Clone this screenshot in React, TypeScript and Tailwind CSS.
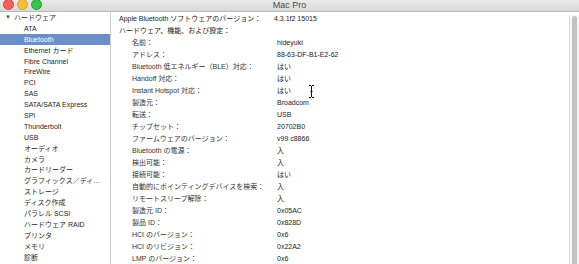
const font = "font-['Liberation_Sans','Noto_Sans_CJK_JP',sans-serif]";

const sidebarItems = [
  "ATA",
  "Bluetooth",
  "Ethernet カード",
  "Fibre Channel",
  "FireWire",
  "PCI",
  "SAS",
  "SATA/SATA Express",
  "SPI",
  "Thunderbolt",
  "USB",
  "オーディオ",
  "カメラ",
  "カードリーダー",
  "グラフィックス／ディ…",
  "ストレージ",
  "ディスク作成",
  "パラレル SCSI",
  "ハードウェア RAID",
  "プリンタ",
  "メモリ",
  "診断",
  "電源",
];

const details: [string, string][] = [
  ["名前：", "hideyuki"],
  ["アドレス：", "88-63-DF-B1-E2-62"],
  ["Bluetooth 低エネルギー（BLE）対応：", "はい"],
  ["Handoff 対応：", "はい"],
  ["Instant Hotspot 対応：", "はい"],
  ["製造元：", "Broadcom"],
  ["転送：", "USB"],
  ["チップセット：", "20702B0"],
  ["ファームウェアのバージョン：", "v99 c8866"],
  ["Bluetooth の電源：", "入"],
  ["検出可能：", "入"],
  ["接続可能：", "はい"],
  ["自動的にポインティングデバイスを検索：", "入"],
  ["リモートスリープ解除：", "入"],
  ["製造元 ID：", "0x05AC"],
  ["製品 ID：", "0x828D"],
  ["HCI のバージョン：", "0x6"],
  ["HCI のリビジョン：", "0x22A2"],
  ["LMP のバージョン：", "0x6"],
];

function TitleBar() {
  return (
    <div className="grid h-[12px] shrink-0 grid-cols-[1fr_auto_1fr] items-center border-b border-[#b9b9b9] bg-gradient-to-b from-[#e9e9e9] to-[#d9d9d9]">
      <div className="-mt-[3px] flex gap-[3px] pl-[3px]">
        <span className="h-[11px] w-[11px] rounded-full border border-[#d9443c] bg-[#f4605a]" />
        <span className="h-[11px] w-[11px] rounded-full border border-[#d99f1f] bg-[#f7bd34]" />
        <span className="h-[11px] w-[11px] rounded-full border border-[#1da22e] bg-[#34c64a]" />
      </div>
      <div className="-mt-[1px] text-[9px] leading-none text-[#4a4a4a]">Mac Pro</div>
      <div />
    </div>
  );
}

function Sidebar() {
  return (
    <div className="w-[111px] shrink-0 border-r border-[#d0d0d0] text-[7px] text-[#262626]">
      <div className="flex h-[10.9px] items-center pl-[5px] leading-none">
        <span className="mr-[3px] text-[6px] text-[#555]">▼</span>
        ハードウェア
      </div>
      {sidebarItems.map((item) => (
        <div
          key={item}
          className={`flex h-[10.9px] items-center whitespace-nowrap pl-[24px] leading-none ${
            item === "Bluetooth" ? "bg-[#6d8fc9] text-white" : ""
          }`}
        >
          {item}
        </div>
      ))}
    </div>
  );
}

function Content() {
  return (
    <div className="relative flex-1 pl-[8px] text-[7px] text-[#222]">
      <div className="flex h-[12px] items-center whitespace-nowrap leading-none">
        <span className="w-[155px]">Apple Bluetooth ソフトウェアのバージョン：</span>
        <span>4.3.1f2 15015</span>
      </div>
      <div className="flex h-[12px] items-center leading-none">ハードウェア、機能、および設定：</div>
      {details.map(([k, v]) => (
        <div key={k} className="flex h-[12px] items-center whitespace-nowrap pl-[13px] leading-none">
          <span className="w-[145px] text-[#333]">{k}</span>
          <span>{v}</span>
        </div>
      ))}
      {/* mouse I-beam */}
      <svg className="absolute left-[197px] top-[73px]" width="7" height="13" viewBox="0 0 7 13">
        <path d="M1 0.5h2M4 0.5h2M3.5 1v11M1 12.5h2M4 12.5h2M2.5 6.5h2" stroke="#111" strokeWidth="1" fill="none" />
      </svg>
    </div>
  );
}

function Scrollbar() {
  return (
    <div className="mt-[3px] flex w-[10px] shrink-0 justify-center border-l border-[#dadada] bg-[#f6f6f6] pt-[1px]">
      <div className="w-[5px] rounded-t-full bg-[#c2c2c2]" />
    </div>
  );
}

export default function App() {
  return (
    <div className={`flex h-[264px] w-[579px] flex-col overflow-hidden bg-white ${font}`}>
      <TitleBar />
      <div className="flex min-h-0 flex-1">
        <Sidebar />
        <Content />
        <Scrollbar />
      </div>
    </div>
  );
}
